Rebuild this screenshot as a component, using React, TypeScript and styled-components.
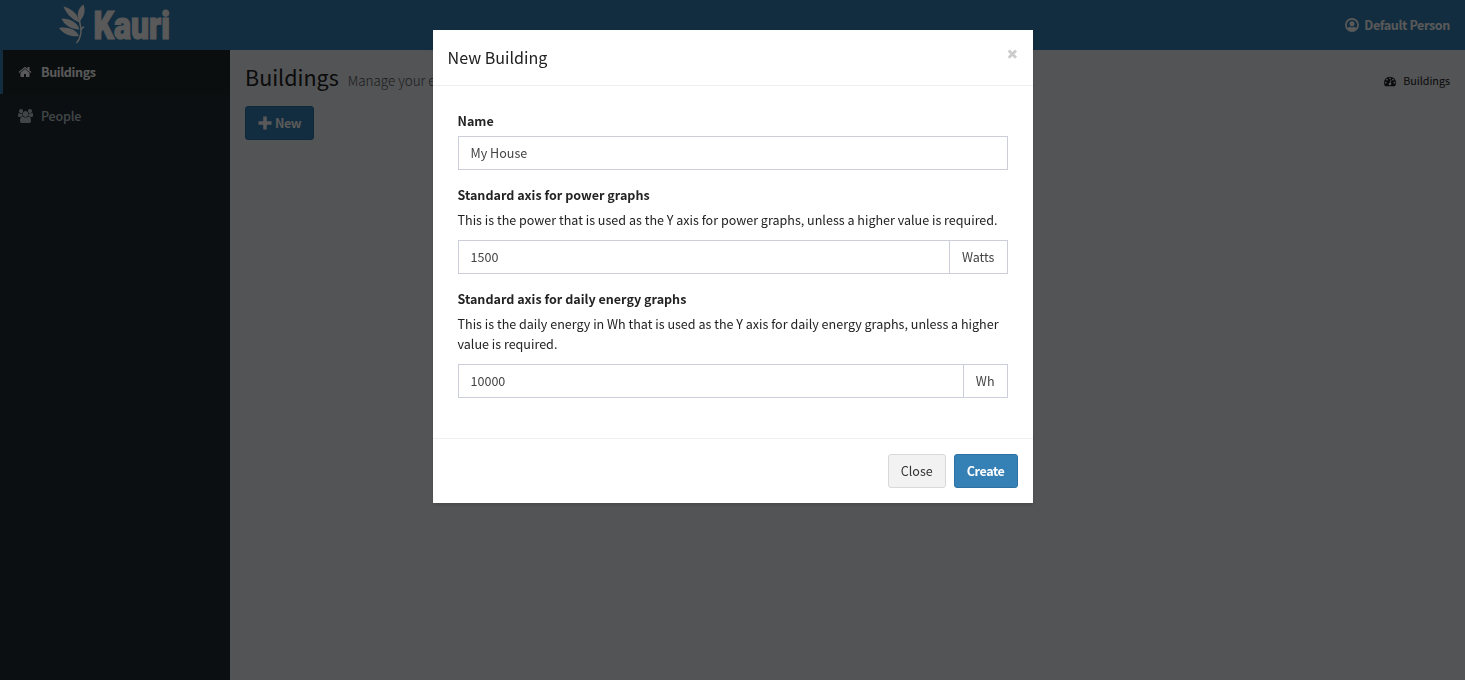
import React from 'react';
import styled, { createGlobalStyle } from 'styled-components';

const GlobalStyle = createGlobalStyle`
  *, *::before, *::after { box-sizing: border-box; }
  html, body { margin: 0; padding: 0; height: 100%; overflow: hidden; }
  body {
    font-family: "Noto Sans CJK SC", "Open Sans", sans-serif;
    font-size: 12.55px;
    line-height: 20px;
    color: #222;
    background: #ecf0f5;
  }
  h1, h4, p { margin: 0; font-weight: 400; }
  button, input { font: inherit; }
`;

const Page = styled.div`
  display: flex;
  flex-direction: column;
  height: 100vh;
`;

const Header = styled.header`
  display: flex;
  flex: none;
  height: 50px;
  justify-content: space-between;
  background: #3581b6;
  color: #fff;
`;

const Brand = styled.a`
  display: flex;
  width: 230px;
  justify-content: center;
`;

const UserLink = styled.a`
  display: flex;
  align-items: center;
  gap: 5px;
  padding-right: 15px;
  font-weight: 700;
  letter-spacing: -0.37px;
`;

const Columns = styled.div`
  display: flex;
  flex: 1;
  min-height: 0;
`;

const Sidebar = styled.nav`
  width: 230px;
  flex: none;
  background: #222d32;
`;

const NavItem = styled.a<{ $active?: boolean }>`
  display: flex;
  align-items: center;
  height: 44px;
  padding-left: 15px;
  border-left: 3px solid ${p => (p.$active ? '#3581b6' : 'transparent')};
  background: ${p => (p.$active ? '#1e282c' : 'transparent')};
  color: ${p => (p.$active ? '#fff' : '#b8c7ce')};
  font-weight: ${p => (p.$active ? 700 : 500)};
  letter-spacing: ${p => (p.$active ? '-0.37px' : '-0.2px')};
`;

const NavIcon = styled.span`
  display: flex;
  width: 23px;
`;

const Content = styled.main`
  flex: 1;
  background: #ecf0f5;
`;

const ContentHeader = styled.section`
  display: flex;
  justify-content: space-between;
  padding: 15px 15px 0;
  height: 41px;
`;

const PageTitle = styled.h1`
  font-size: 21.5px;
  line-height: 24px;
  white-space: nowrap;
`;

const Subtitle = styled.small`
  margin-left: 9px;
  font-size: 13.4px;
  font-weight: 300;
  color: #555;
`;

const Breadcrumb = styled.div`
  display: flex;
  align-items: center;
  gap: 7px;
  height: 32px;
  font-size: 10.75px;
`;

const ContentBody = styled.section`
  padding: 15px;
`;

const Button = styled.button<{ $primary?: boolean }>`
  display: inline-flex;
  align-items: center;
  justify-content: center;
  height: 34px;
  padding: 0 12px;
  border: 1px solid ${p => (p.$primary ? '#2d72a3' : '#d9d9d9')};
  border-radius: 3px;
  background: ${p => (p.$primary ? '#3581b6' : '#f2f2f2')};
  color: ${p => (p.$primary ? '#fff' : '#333')};
  font-weight: ${p => (p.$primary ? 700 : 400)};
  letter-spacing: ${p => (p.$primary ? '-0.4px' : '0')};
  gap: 3px;
`;

const Overlay = styled.div`
  position: fixed;
  inset: 0;
  display: flex;
  align-items: flex-start;
  justify-content: center;
  padding-top: 30px;
  background: rgba(0, 0, 0, 0.65);
`;

const Dialog = styled.div`
  width: 600px;
  background: #fff;
  box-shadow: 0 2px 3px rgba(0, 0, 0, 0.125);
`;

const DialogHeader = styled.div`
  display: flex;
  justify-content: space-between;
  height: 56px;
  padding: 15px;
  border-bottom: 1px solid #f0f0f0;
`;

const DialogTitle = styled.h4`
  font-size: 16.1px;
  line-height: 24px;
`;

const CloseMark = styled.button`
  display: flex;
  align-items: center;
  height: 18px;
  padding: 0;
  border: 0;
  background: none;
  color: #ccc;
`;

const DialogBody = styled.div`
  display: flex;
  flex-direction: column;
  gap: 15px;
  height: 352px;
  padding: 25px;
`;

const Field = styled.div`
  display: flex;
  flex-direction: column;
`;

const Label = styled.label`
  margin-bottom: 5px;
  font-weight: 700;
`;

const Help = styled.p`
  margin-bottom: 10px;
`;

const InputGroup = styled.div`
  display: flex;
  height: 34px;
  border: 1px solid #cccfd9;
  color: #444;
`;

const Input = styled.input`
  flex: 1;
  min-width: 0;
  padding: 0 12px;
  border: 0;
  outline: 0;
  background: #fff;
  color: inherit;
`;

const Addon = styled.span`
  display: flex;
  align-items: center;
  padding: 0 12px;
  border-left: 1px solid #cccfd9;
`;

const DialogFooter = styled.div`
  display: flex;
  justify-content: flex-end;
  gap: 8px;
  height: 65px;
  padding: 15px;
  border-top: 1px solid #f0f0f0;
`;

const paths = {
  home: 'M1472 992v480q0 26-19 45t-45 19h-384v-384h-256v384h-384q-26 0-45-19t-19-45v-480q0-1 .5-3t.5-3l575-474 575 474q1 2 1 6zm223-69l-62 74q-8 9-21 11h-3q-13 0-21-7l-692-577-692 577q-12 8-24 7-13-2-21-11l-62-74q-8-10-7-23.5t11-21.5l719-599q32-26 76-26t76 26l244 204v-195q0-14 9-23t23-9h192q14 0 23 9t9 23v408l219 182q10 8 11 21.5t-7 23.5z',
  plus: 'M672 64H1120V672H1728V1120H1120V1728H672V1120H64V672H672Z',
  gauge: 'M384 1152q0-53-37.5-90.5t-90.5-37.5-90.5 37.5-37.5 90.5 37.5 90.5 90.5 37.5 90.5-37.5 37.5-90.5zm192-448q0-53-37.5-90.5t-90.5-37.5-90.5 37.5-37.5 90.5 37.5 90.5 90.5 37.5 90.5-37.5 37.5-90.5zm428 481l101-382q6-26-7.5-48.5t-38.5-29.5-48 6.5-30 39.5l-101 382q-60 5-107 43.5t-63 98.5q-20 77 20 146t117 89 146-20 89-117q16-60-6-117t-72-91zm660-33q0-53-37.5-90.5t-90.5-37.5-90.5 37.5-37.5 90.5 37.5 90.5 90.5 37.5 90.5-37.5 37.5-90.5zm-640-640q0-53-37.5-90.5t-90.5-37.5-90.5 37.5-37.5 90.5 37.5 90.5 90.5 37.5 90.5-37.5 37.5-90.5zm448 192q0-53-37.5-90.5t-90.5-37.5-90.5 37.5-37.5 90.5 37.5 90.5 90.5 37.5 90.5-37.5 37.5-90.5zm320 448q0 261-141 483-19 29-54 29h-1402q-35 0-54-29-141-221-141-483 0-182 71-348t191-286 286-191 348-71 348 71 286 191 191 286 71 348z',
  users: 'M529 896q-162 5-265 128h-134q-82 0-138-40.5t-56-118.5q0-353 124-353 6 0 43.5 21t97.5 42.5 119 21.5q67 0 133-23-5 37-5 66 0 159 93 290zm1071 637q0 120-73 189.5t-194 69.5h-874q-121 0-194-69.5t-73-189.5q0-53 3.5-103.5t14-109 26.5-108.5 43-97.5 62-81 85.5-53.5 111.5-20q10 0 43 21.5t73 48 107 48 135 21.5 135-21.5 107-48 73-48 43-21.5q61 0 111.5 20t85.5 53.5 62 81 43 97.5 26.5 108.5 14 109 3.5 103.5zm-1024-1277q0 106-75 181t-181 75-181-75-75-181 75-181 181-75 181 75 75 181zm704 384q0 159-112.5 271.5t-271.5 112.5-271.5-112.5-112.5-271.5 112.5-271.5 271.5-112.5 271.5 112.5 112.5 271.5zm576 225q0 78-56 118.5t-138 40.5h-134q-103-123-265-128 93-131 93-290 0-29-5-66 66 23 133 23 59 0 119-21.5t97.5-42.5 43.5-21q124 0 124 353zm-128-609q0 106-75 181t-181 75-181-75-75-181 75-181 181-75 181 75 75 181z',
};

function Icon({ name, size = 14 }: { name: keyof typeof paths; size?: number }) {
  const wide = name === 'users';
  return (
    <svg
      width={wide ? (size * 1920) / 1792 : size}
      height={size}
      viewBox={wide ? '-64 0 1920 1792' : '0 0 1792 1792'}
      fill="currentColor"
    >
      <path d={paths[name]} />
    </svg>
  );
}

function PersonIcon() {
  return (
    <svg width="14" height="14" viewBox="0 0 14 14" fill="currentColor">
      <circle cx="7" cy="7" r="6.100" fill="none" stroke="currentColor" strokeWidth="1.700" />
      <circle cx="7" cy="5.700" r="2.500" />
      <path d="M2.600 11C3 9.300 4 8.900 5 8.800Q7 10 9 8.800C10 8.900 11 9.300 11.400 11Q7 14.500 2.600 11Z" />
    </svg>
  );
}

function Logo() {
  return (
    <svg width="120" height="50" viewBox="55 0 120 50" fill="#fff">
      <path d="M79.500 22.500C71 19 66 13 63.500 6.500C72 9 78 14 79.500 22.500Z" />
      <path d="M79.500 21.500C76 15 78 8 83.500 4.500C86 11 84 17 79.500 21.500Z" />
      <path d="M79.500 29.500C72 29.500 65 26 61.500 18.500C70 18.500 77 22 79.500 29.500Z" />
      <path d="M79 36C72 37 64 35 59 28C67 26.500 76 29 79 36Z" />
      <path d="M79.500 20C80 25 82 30 80.500 35Q79.500 40 76.500 43M80.500 30L84 26.500" fill="none" stroke="#fff" strokeWidth="1.500" />
      <g transform="translate(93.500 39) scale(0.787 1)">
        <text
          fontFamily="Roboto, sans-serif"
          fontWeight="900"
          fontSize="39.500"
          textLength="97.200"
          lengthAdjust="spacingAndGlyphs"
          stroke="#fff"
          strokeWidth="1.200"
        >
          Kauri
        </text>
      </g>
    </svg>
  );
}

export default function App() {
  return (
    <>
      <GlobalStyle />
      <Page>
        <Header>
          <Brand><Logo /></Brand>
          <UserLink><PersonIcon />Default Person</UserLink>
        </Header>
        <Columns>
          <Sidebar>
            <NavItem $active><NavIcon><Icon name="home" /></NavIcon>Buildings</NavItem>
            <NavItem><NavIcon><Icon name="users" /></NavIcon>People</NavItem>
          </Sidebar>
          <Content>
            <ContentHeader>
              <PageTitle>Buildings<Subtitle>Manage your energy buildings</Subtitle></PageTitle>
              <Breadcrumb><Icon name="gauge" size={12} />Buildings</Breadcrumb>
            </ContentHeader>
            <ContentBody>
              <Button $primary><Icon name="plus" />New</Button>
            </ContentBody>
          </Content>
        </Columns>
      </Page>
      <Overlay>
        <Dialog role="dialog">
          <DialogHeader>
            <DialogTitle>New Building</DialogTitle>
            <CloseMark aria-label="Close">
              <svg width="11" height="11" viewBox="0 0 11 11" fill="none" stroke="currentColor" strokeWidth="2.800">
                <path d="M1.700 1.400L9 8.700M9 1.400L1.700 8.700" />
              </svg>
            </CloseMark>
          </DialogHeader>
          <DialogBody>
            <Field>
              <Label>Name</Label>
              <InputGroup><Input defaultValue="My House" /></InputGroup>
            </Field>
            <Field>
              <Label>Standard axis for power graphs</Label>
              <Help>This is the power that is used as the Y axis for power graphs, unless a higher value is required.</Help>
              <InputGroup><Input defaultValue="1500" /><Addon>Watts</Addon></InputGroup>
            </Field>
            <Field>
              <Label>Standard axis for daily energy graphs</Label>
              <Help>This is the daily energy in Wh that is used as the Y axis for daily energy graphs, unless a higher value is required.</Help>
              <InputGroup><Input defaultValue="10000" /><Addon>Wh</Addon></InputGroup>
            </Field>
          </DialogBody>
          <DialogFooter>
            <Button>Close</Button>
            <Button $primary>Create</Button>
          </DialogFooter>
        </Dialog>
      </Overlay>
    </>
  );
}
